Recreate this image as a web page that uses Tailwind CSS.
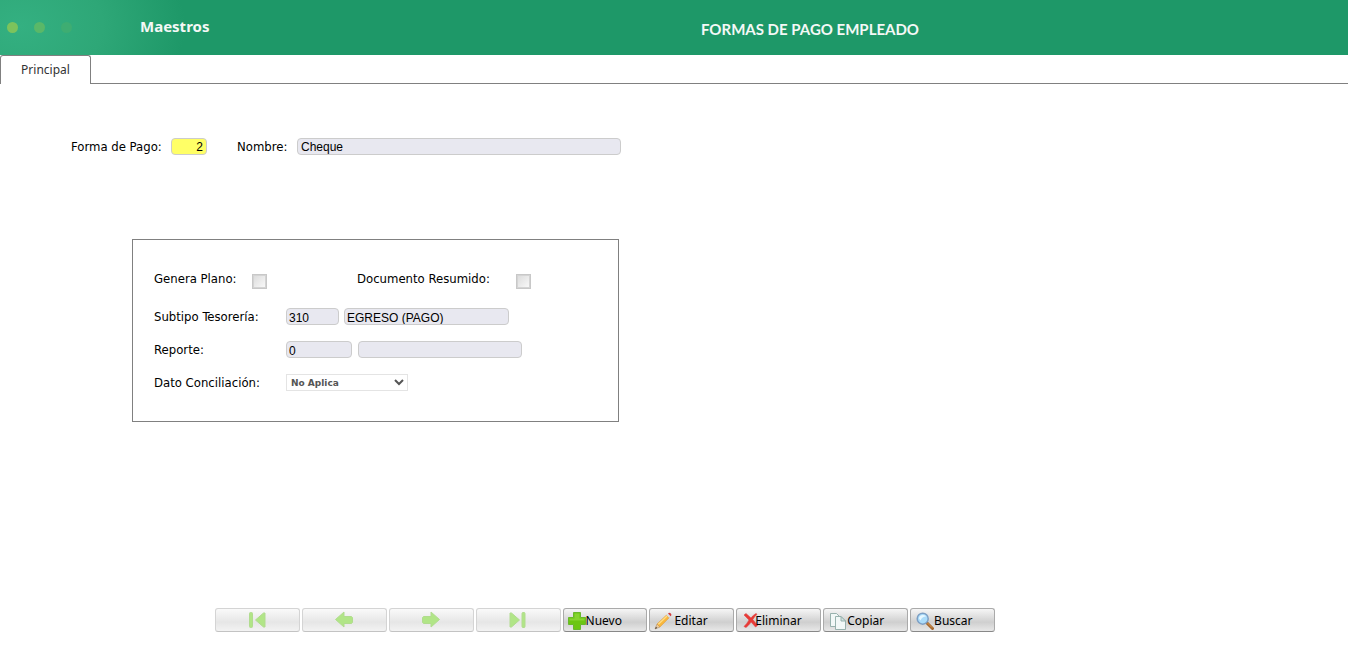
<!DOCTYPE html>
<html lang="es">

<head>
    <meta charset="UTF-8">
    <meta name="viewport" content="width=device-width, initial-scale=1.0">
    <title>Formas de Pago Empleado</title>
    <script src="https://cdn.jsdelivr.net/npm/@tailwindcss/browser@4"></script>
</head>

<body class="flex min-h-screen flex-col bg-white font-['Noto_Sans',sans-serif] text-xs text-black">
    <!-- Header -->
    <header class="flex h-[55px] items-center bg-[#1e9868] bg-[radial-gradient(ellipse_165px_120px_at_20px_26px,#34b081,#2ea777_50%,#1e9868)] text-[#f4f8f6]">
        <div class="flex w-[140px] gap-4 pl-[7px]">
            <span class="size-[11px] rounded-full bg-[#7cc35c]"></span>
            <span class="size-[11px] rounded-full bg-[#5ab868]"></span>
            <span class="size-[11px] rounded-full bg-[#3ead72]"></span>
        </div>
        <span class="pb-1 text-[15px] font-bold">Maestros</span>
        <h1 class="ml-auto w-[48%] pt-1 font-['Lato',sans-serif] text-[15px] font-bold">FORMAS DE PAGO EMPLEADO</h1>
    </header>

    <!-- Tabs -->
    <nav class="flex h-[29px]">
        <button type="button" class="w-[91px] rounded-t-[3px] border border-b-0 border-[#808080] text-[#333]">Principal</button>
        <div class="flex-1 border-b border-[#808080]"></div>
    </nav>

    <form class="flex flex-1 flex-col">
        <main class="flex-1 pt-[54px]">
            <div class="flex h-[17px] items-center pl-[71px]">
                <label for="forma" class="w-[100px] font-['DejaVu_Sans_Condensed','DejaVu_Sans',sans-serif] text-[13px]">Forma de Pago:</label>
                <input type="text" id="forma" value="2" readonly class="h-[17px] w-9 rounded border border-[#ccc] bg-[#ffff66] px-[3px] text-right font-['Liberation_Sans',sans-serif]">
                <label for="nombre" class="ml-[30px] w-[60px] font-['DejaVu_Sans_Condensed','DejaVu_Sans',sans-serif] text-[13px]">Nombre:</label>
                <input type="text" id="nombre" value="Cheque" readonly class="h-[17px] w-[324px] rounded border border-[#ccc] bg-[#e8e8f0] px-[3px] font-['Liberation_Sans',sans-serif]">
            </div>

            <section class="mt-[84px] ml-[132px] w-[487px] border border-[#808080] pt-[23px] pb-[22px] pl-[21px] font-['DejaVu_Sans_Condensed','DejaVu_Sans',sans-serif] text-[13px]">
                <div class="flex h-[37px] items-center">
                    <label for="plano" class="w-[98px] pb-[6px]">Genera Plano:</label>
                    <input type="checkbox" id="plano" class="size-[15px] appearance-none border-2 border-[#d4d4d4] bg-linear-to-br from-[#ddd] to-[#f8f8f8] outline-1 -outline-offset-1 outline-[#c8c8c8]">
                    <label for="resumido" class="ml-[90px] w-[159px] pb-[6px]">Documento Resumido:</label>
                    <input type="checkbox" id="resumido" class="size-[15px] appearance-none border-2 border-[#d4d4d4] bg-linear-to-br from-[#ddd] to-[#f8f8f8] outline-1 -outline-offset-1 outline-[#c8c8c8]">
                </div>
                <div class="flex h-[33px] items-center">
                    <label for="subtipo" class="w-[132px]">Subtipo Tesorería:</label>
                    <input type="text" id="subtipo" value="310" readonly class="h-[17px] w-[53px] rounded border border-[#ccc] bg-[#e8e8f0] px-[2px] pt-[2px] font-['Liberation_Sans',sans-serif] text-xs">
                    <input type="text" aria-label="Nombre subtipo" value="EGRESO (PAGO)" readonly class="ml-[5px] h-[17px] w-[165px] rounded border border-[#ccc] bg-[#e8e8f0] px-[2px] pt-[2px] font-['Liberation_Sans',sans-serif] text-xs">
                </div>
                <div class="flex h-[33px] items-center">
                    <label for="reporte" class="w-[132px]">Reporte:</label>
                    <input type="text" id="reporte" value="0" readonly class="h-[17px] w-[66px] rounded border border-[#ccc] bg-[#e8e8f0] px-[2px] pt-[2px] font-['Liberation_Sans',sans-serif] text-xs">
                    <input type="text" aria-label="Nombre reporte" readonly class="ml-[6px] h-[17px] w-[164px] rounded border border-[#ccc] bg-[#e8e8f0] px-[2px] font-['Liberation_Sans',sans-serif] text-xs">
                </div>
                <div class="flex h-[33px] items-center">
                    <label for="conciliacion" class="w-[132px]">Dato Conciliación:</label>
                    <select id="conciliacion" class="h-[17px] w-[122px] border border-[#e4e4e4] bg-white font-['DejaVu_Sans',sans-serif] text-[9px] font-bold text-[#555]">
                        <option>No Aplica</option>
                    </select>
                </div>
            </section>
        </main>

        <!-- Toolbar -->
        <footer class="mb-[26px] ml-[215px] grid w-[780px] grid-cols-9 gap-[2px]">
            <button type="button" disabled aria-label="Primero" class="flex h-6 items-center justify-center rounded-[3px] border border-[#aaa] border-b-[#888] bg-linear-to-b from-[#f6f6f6] via-[#cfcfcf] via-60% to-[#e8e8e8] opacity-50">
                <svg class="size-[18px]" viewBox="0 0 18 18" fill="#66cc11" stroke="#66bb22">
                    <rect x="1.5" y="1.5" width="3" height="15" rx="1" />
                    <path d="M17 2v14h-1.500L7.500 9l8-7z" />
                </svg>
            </button>
            <button type="button" disabled aria-label="Anterior" class="flex h-6 items-center justify-center rounded-[3px] border border-[#aaa] border-b-[#888] bg-linear-to-b from-[#f6f6f6] via-[#cfcfcf] via-60% to-[#e8e8e8] opacity-50">
                <svg class="size-[18px]" viewBox="0 0 18 18" fill="#66cc11" stroke="#66bb22">
                    <path d="M.5 8.500L9 1v4.500h7.500l1 1v5l-1 1H9V16z" />
                </svg>
            </button>
            <button type="button" disabled aria-label="Siguiente" class="flex h-6 items-center justify-center rounded-[3px] border border-[#aaa] border-b-[#888] bg-linear-to-b from-[#f6f6f6] via-[#cfcfcf] via-60% to-[#e8e8e8] opacity-50">
                <svg class="size-[18px]" viewBox="0 0 18 18" fill="#66cc11" stroke="#66bb22">
                    <path d="M17.500 8.500L9 1v4.500H1.500l-1 1v5l1 1H9V16z" />
                </svg>
            </button>
            <button type="button" disabled aria-label="Último" class="flex h-6 items-center justify-center rounded-[3px] border border-[#aaa] border-b-[#888] bg-linear-to-b from-[#f6f6f6] via-[#cfcfcf] via-60% to-[#e8e8e8] opacity-50">
                <svg class="size-[18px]" viewBox="0 0 18 18" fill="#66cc11" stroke="#66bb22">
                    <path d="M1 2v14h1.500l8-7-8-7z" />
                    <rect x="13" y="1.500" width="3" height="15" rx="1" />
                </svg>
            </button>
            <button type="button" class="flex h-6 items-center rounded-[3px] border border-[#aaa] border-b-[#888] bg-linear-to-b from-[#f6f6f6] via-[#cfcfcf] via-60% to-[#e8e8e8] pt-[2px] pl-1">
                <svg class="size-[18px]" viewBox="0 0 18 18">
                    <path d="M5.500.500h7v5h5v7h-5v5h-7v-5h-5v-7h5z" fill="#6cc612" stroke="#68b82c" stroke-linejoin="round" />
                    <path d="M6.500 1.500h5v5h5v2h-15v-2h5z" fill="#86d430" />
                </svg>
                Nuevo
            </button>
            <button type="button" class="flex h-6 items-center gap-[2px] rounded-[3px] border border-[#aaa] border-b-[#888] bg-linear-to-b from-[#f6f6f6] via-[#cfcfcf] via-60% to-[#e8e8e8] pt-[2px] pl-1">
                <svg class="size-[18px]" viewBox="0 0 18 18">
                    <path d="M1 17l2-5 3 3z" fill="#e8c9a0" stroke="#b08b60" stroke-width=".6" />
                    <path d="M1 17l1-2.200 1.200 1.200z" fill="#444" />
                    <path d="M3 12L12.500 3 15.200 5.700 6 15z" fill="#f8b73c" stroke="#d8943a" stroke-width=".5" />
                    <path d="M4.300 12.300l8.700-8.300" stroke="#ffdd85" stroke-width="1.300" />
                    <path d="M12.500 3l1.500-1.500L16.700 4.200 15.200 5.700z" fill="#d9dde2" />
                    <path d="M14 1.500c1-1 2-.8 2.800 0s.9 1.900-.1 2.700z" fill="#d43b3b" />
                </svg>
                Editar
            </button>
            <button type="button" class="flex h-6 items-center rounded-[3px] border border-[#aaa] border-b-[#888] bg-linear-to-b from-[#f6f6f6] via-[#cfcfcf] via-60% to-[#e8e8e8] pt-[2px] pl-[6px]">
                <svg class="-mr-[6px] size-[18px]" viewBox="0 0 18 18">
                    <path d="M1 3l2-1.500 5 4.500c1.500-2 3-3.300 5-4.500l1 .8c-1.700 1.600-3 3.200-4.200 5.200l4.700 6-2 1.500-4.300-5C6.500 12 5 14 3 15.500l-2-1C3 12.500 4.700 10.500 6 8z" fill="#e83a36" stroke="#e04545" stroke-width=".6" />
                </svg>
                Eliminar
            </button>
            <button type="button" class="flex h-6 items-center rounded-[3px] border border-[#aaa] border-b-[#888] bg-linear-to-b from-[#f6f6f6] via-[#cfcfcf] via-60% to-[#e8e8e8] pt-[2px] pl-[5px]">
                <svg class="size-[18px]" viewBox="0 0 18 18" fill="#f2f8f7" stroke="#8eaaa6" stroke-width=".9" stroke-linejoin="round">
                    <path d="M1.500 1.500h6l3 3v10h-9z" />
                    <path d="M6.500 4.500H12l4.500 4.500v8.500h-10z" />
                    <path d="M12 4.500V9h4.500z" fill="#d4e4e2" />
                </svg>
                Copiar
            </button>
            <button type="button" class="flex h-6 items-center rounded-[3px] border border-[#aaa] border-b-[#888] bg-linear-to-b from-[#f6f6f6] via-[#cfcfcf] via-60% to-[#e8e8e8] pt-[2px] pl-[5px]">
                <svg class="size-[18px]" viewBox="0 0 18 18">
                    <path d="M10.500 10.500l6 6" stroke="#a5672d" stroke-width="3" stroke-linecap="round" />
                    <path d="M11.500 11l4.500 4.500" stroke="#d99a52" />
                    <circle cx="6.700" cy="6.700" r="5.500" fill="#abdcfa" stroke="#7d9fc4" stroke-width="1.500" />
                    <path d="M3 6.500C3 4.500 4.500 3 7 3s3 1.500 3 1.500C7.500 4.500 5.500 6 4.500 8.500z" fill="#e6f7ff" />
                </svg>
                Buscar
            </button>
        </footer>
    </form>
</body>

</html>
